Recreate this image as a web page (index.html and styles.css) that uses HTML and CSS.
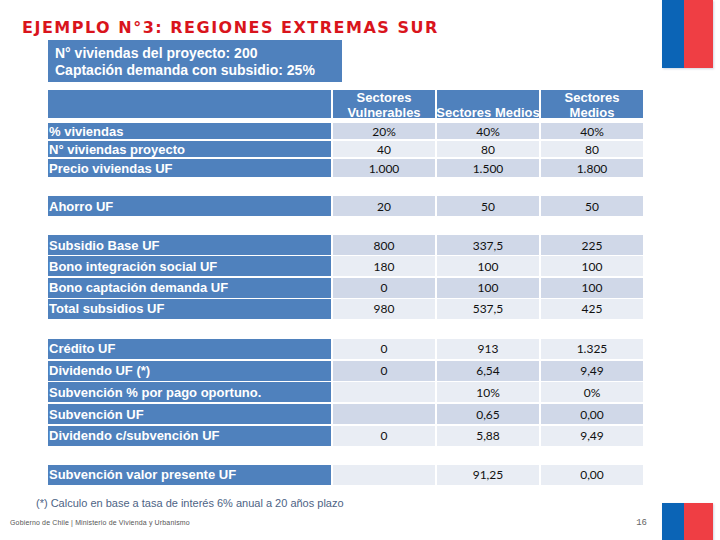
FILE: index.html
```html
<!DOCTYPE html>
<html lang="es">
<head>
<meta charset="utf-8">
<title>Ejemplo N°3</title>
<link rel="stylesheet" href="styles.css">
</head>
<body>
<div class="page">
  <div class="flag flag-top"><span class="fb"></span><span class="fr"></span></div>
  <div class="flag flag-bottom"><span class="fb"></span><span class="fr"></span></div>

  <h1 class="title">EJEMPLO N°3: REGIONES EXTREMAS SUR</h1>

  <div class="info">
    <div>N° viviendas del proyecto: 200</div>
    <div>Captación demanda con subsidio: 25%</div>
  </div>

  <div class="table">
    <div class="grp head">
      <div class="lab"></div>
      <div class="hd"><span>Sectores<br>Vulnerables</span></div>
      <div class="hd"><span>Sectores Medios</span></div>
      <div class="hd"><span>Sectores<br>Medios</span></div>
    </div>

    <div class="grp top">
      <div class="lab">% viviendas</div><div class="d">20%</div><div class="d">40%</div><div class="d">40%</div>
      <div class="lab">N° viviendas proyecto</div><div class="l">40</div><div class="l">80</div><div class="l">80</div>
      <div class="lab">Precio viviendas UF</div><div class="d">1.000</div><div class="d">1.500</div><div class="d">1.800</div>
    </div>

    <div class="grp one gap-a">
      <div class="lab">Ahorro UF</div><div class="d">20</div><div class="d">50</div><div class="d">50</div>
    </div>

    <div class="grp sub gap-a">
      <div class="lab">Subsidio Base UF</div><div class="d">800</div><div class="d">337,5</div><div class="d">225</div>
      <div class="lab">Bono integración social UF</div><div class="l">180</div><div class="l">100</div><div class="l">100</div>
      <div class="lab">Bono captación demanda UF</div><div class="d">0</div><div class="d">100</div><div class="d">100</div>
      <div class="lab">Total subsidios UF</div><div class="l">980</div><div class="l">537,5</div><div class="l">425</div>
    </div>

    <div class="grp cred gap-b">
      <div class="lab">Crédito UF</div><div class="l">0</div><div class="l">913</div><div class="l">1.325</div>
      <div class="lab">Dividendo UF (*)</div><div class="d">0</div><div class="d">6,54</div><div class="d">9,49</div>
      <div class="lab">Subvención % por pago oportuno.</div><div class="l"></div><div class="l">10%</div><div class="l">0%</div>
      <div class="lab">Subvención UF</div><div class="d"></div><div class="d">0,65</div><div class="d">0,00</div>
      <div class="lab">Dividendo c/subvención UF</div><div class="l">0</div><div class="l">5,88</div><div class="l">9,49</div>
    </div>

    <div class="grp one gap-a">
      <div class="lab">Subvención valor presente UF</div><div class="l"></div><div class="l">91,25</div><div class="l">0,00</div>
    </div>
  </div>

  <p class="note">(*) Calculo en base a tasa de interés 6% anual a 20 años plazo</p>

  <div class="footer">
    <span class="credit">Gobierno de Chile | Ministerio de Vivienda y Urbanismo</span>
    <span class="pnum">16</span>
  </div>
</div>
</body>
</html>
```

FILE: styles.css
```css
html, body {
  margin: 0;
  padding: 0;
  background: #ffffff;
}

.page {
  position: relative;
  width: 720px;
  height: 540px;
  overflow: hidden;
  font-family: "Liberation Sans", Arial, sans-serif;
}

.flag {
  position: absolute;
  left: 662px;
  display: flex;
  box-shadow: 1px 1px 2px rgba(120, 140, 170, 0.35);
}
.flag-top { top: 0; height: 68px; }
.flag-bottom { top: 503px; height: 40px; }
.fb { width: 22px; background: #0b64b6; }
.fr { width: 29px; background: #ef3e44; }

.title {
  margin: 18px 0 0 22px;
  font-family: "DejaVu Sans", Verdana, sans-serif;
  font-weight: bold;
  font-size: 16px;
  line-height: 19px;
  color: #d9141c;
  letter-spacing: 1.5px;
}

.info {
  margin: 3px 0 0 48px;
  width: 287px;
  height: 37px;
  padding: 5px 0 0 7px;
  background: #4f81bd;
  color: #ffffff;
  font-weight: bold;
  font-size: 14px;
  line-height: 17px;
}

.table {
  margin: 8px 0 0 48px;
  display: flex;
  flex-direction: column;
}

.grp {
  display: grid;
  grid-template-columns: 283px 102px 102px 102px;
  column-gap: 2px;
}
.head { grid-auto-rows: 28px; }
.top { grid-template-rows: 16px 16px 18px; row-gap: 2px; margin-top: 5px; }
.one { grid-auto-rows: 20px; }
.sub { grid-auto-rows: 20px; row-gap: 1.33px; }
.cred { grid-auto-rows: 20px; row-gap: 1.75px; }
.gap-a { margin-top: 19px; }
.gap-b { margin-top: 20px; }

.lab {
  background: #4f81bd;
  color: #ffffff;
  font-weight: bold;
  font-size: 13px;
  padding-left: 1px;
  display: flex;
  align-items: center;
  white-space: nowrap;
}

.hd {
  background: #4f81bd;
  color: #ffffff;
  font-weight: bold;
  font-size: 13px;
  line-height: 15px;
  text-align: center;
  display: flex;
  align-items: flex-end;
  justify-content: center;
  white-space: nowrap;
}
.hd span {
  margin-bottom: -2px;
}

.d, .l {
  display: flex;
  align-items: center;
  justify-content: center;
  font-family: Lato, "Open Sans", sans-serif;
  font-size: 12px;
  color: #111111;
}
.d { background: #d0d8e8; }
.l { background: #e9edf4; }

.note {
  margin: 12px 0 0 36px;
  font-size: 11px;
  line-height: 13px;
  color: #4d6385;
}

.footer {
  margin: 8px 0 0 10px;
  width: 637px;
  display: flex;
  justify-content: space-between;
  align-items: center;
}
.credit {
  font-size: 7px;
  letter-spacing: 0.15px;
  color: #555555;
}
.pnum {
  font-family: "Liberation Mono", monospace;
  font-size: 9px;
  color: #666666;
}
```
